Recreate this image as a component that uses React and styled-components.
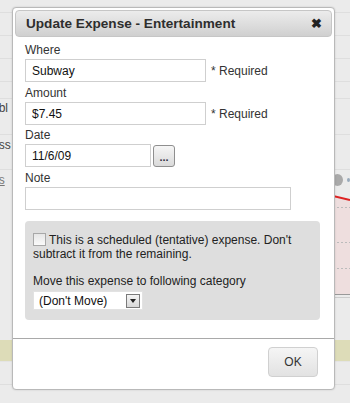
import styled, { createGlobalStyle } from "styled-components"

const GlobalStyle = createGlobalStyle`
body{
    margin: 0;
    font-family: "Liberation Sans", Arial, sans-serif;
    background: #ebebeb;
}
`

const Page = styled.div`
position: relative;
width: 350px;
height: 403px;
overflow: hidden;
background: #ebebeb;
`

const BgRow = styled.div`
box-sizing: border-box;
display: flex;
align-items: center;
justify-content: space-between;
height: ${p => p.$h}px;
border-bottom: 1px solid ${p => p.$line || "#dedede"};
background: ${p => p.$bg || "transparent"};
font-size: 12px;
color: #555;
`

const BgText = styled.span`
margin-left: -8px;
text-decoration: ${p => p.$link ? "underline" : "none"};
color: ${p => p.$link ? "#777" : "#444"};
`

const Dot = styled.span`
width: 11px;
height: 12px;
border-radius: 50%;
background: #a9a9a9;
margin-right: 7px;
box-shadow: 11px 0 0 -4px #9ab;
`

const Dialog = styled.div`
position: absolute;
left: 12px;
top: 7px;
width: 317px;
height: 377px;
background: #fff;
border: 1px solid #b9b9b9;
border-radius: 4px;
box-shadow: 0 0 2px rgba(0,0,0,0.15);
padding: 2px;
display: flex;
flex-direction: column;
`

const TitleBar = styled.div`
box-sizing: border-box;
display: flex;
align-items: center;
justify-content: space-between;
height: 27px;
padding: 0 9px 0 10px;
border: 1px solid #c6c6c6;
border-radius: 4px;
background: linear-gradient(#ececec, #d0d0d0);
font-size: 13.6px;
font-weight: bold;
color: #2e2e2e;
`

const Close = styled.span`
font-size: 13px;
color: #222;
`

const Body = styled.div`
flex: 1;
padding: 5px 10px 0 10px;
`

const Label = styled.div`
font-size: 12px;
line-height: 16px;
color: #333;
`

const Field = styled.div`
display: flex;
align-items: center;
gap: ${p => p.$gap || 5}px;
margin: 1px 0 ${p => p.$mb ?? 3}px 0;
`

const Input = styled.div`
box-sizing: border-box;
width: ${p => p.$w}px;
height: 23px;
border: 1px solid #cfcfcf;
padding-left: 6px;
display: flex;
align-items: center;
font-size: 12px;
color: #111;
`

const Hint = styled.span`
font-size: 12px;
color: #333;
`

const DotsBtn = styled.div`
box-sizing: border-box;
width: 22px;
height: 22px;
border: 1px solid #8f8f8f;
border-radius: 3px;
background: linear-gradient(#f6f6f6, #dadada);
display: flex;
align-items: flex-end;
justify-content: center;
padding-bottom: 5px;
font-size: 11px;
line-height: 8px;
font-weight: bold;
color: #334;
`

const Options = styled.div`
margin-top: 11px;
width: 295px;
box-sizing: border-box;
height: 99px;
background: #dedede;
border-radius: 4px;
padding: 12px 8px 0 8px;
`

const CheckLine = styled.div`
font-size: 12px;
line-height: 14px;
color: #222;
`

const Check = styled.span`
display: inline-block;
box-sizing: border-box;
width: 13px;
height: 13px;
border: 1px solid #a8a8a8;
background: linear-gradient(#e6e6e6, #fafafa);
vertical-align: -2px;
margin-right: 3px;
`

const MoveLabel = styled.div`
margin-top: 13px;
font-size: 12px;
line-height: 14px;
color: #222;
`

const Select = styled.div`
margin-top: 3px;
box-sizing: border-box;
width: 110px;
height: 19px;
background: #fff;
border: 1px solid #e2e2e2;
display: flex;
align-items: center;
justify-content: space-between;
padding: 0 2px 0 5px;
font-size: 12px;
color: #111;
`

const SelectArrow = styled.span`
box-sizing: border-box;
width: 14px;
height: 14px;
border: 1px solid #7a7a7a;
background: linear-gradient(#f4f4f4, #d8d8d8);
display: flex;
align-items: center;
justify-content: center;
`

const Footer = styled.div`
box-sizing: border-box;
border-top: 1px solid #a9a9a9;
height: 51px;
margin: 0 -2px -2px -2px;
display: flex;
justify-content: flex-end;
align-items: flex-start;
padding: 8px 16px 0 0;
`

const OkBtn = styled.div`
box-sizing: border-box;
width: 50px;
height: 30px;
border: 1px solid #d0d0d0;
border-radius: 4px;
background: linear-gradient(#f5f5f5, #e2e2e2);
display: flex;
align-items: center;
justify-content: center;
font-size: 12px;
color: #333;
`

const Chart = styled.svg`
display: block;
margin-left: auto;
`

export default function App(){
    return(
        <>
        <GlobalStyle/>
        <Page>
            <BgRow $h={13}/>
            <BgRow $h={23}/>
            <BgRow $h={23}/>
            <BgRow $h={23}/>
            <BgRow $h={17}/>
            <BgRow $h={18} $line="transparent"><BgText>obl</BgText></BgRow>
            <BgRow $h={18}/>
            <BgRow $h={20} $line="transparent"><BgText>ess</BgText></BgRow>
            <BgRow $h={15}/>
            <BgRow $h={20} $line="transparent"><BgText $link>ns</BgText><Dot/></BgRow>
            <BgRow $h={150} $line="transparent">
                <Chart width="17" height="150" viewBox="0 0 17 150">
                    <path d="M0 6 L17 10 L17 104 L0 104 Z" fill="#eedede"/>
                    <path d="M0 6 L17 10" stroke="#d22" strokeWidth="2" fill="none"/>
                    <path d="M0 17.5 H17 M0 52.5 H17 M0 78.5 H17" stroke="#bbb" strokeDasharray="2 2" strokeWidth="1"/>
                    <path d="M0 104.5 H17" stroke="#999" strokeWidth="1"/>
                    <path d="M0 107.5 H17" stroke="#ccc" strokeWidth="1"/>
                </Chart>
            </BgRow>
            <BgRow $h={22} $bg="#dddcb8" $line="#e4e4e4"/>
            <BgRow $h={23}/>

            <Dialog>
                <TitleBar>
                    <span>Update Expense - Entertainment</span>
                    <Close>✖</Close>
                </TitleBar>
                <Body>
                    <Label>Where</Label>
                    <Field>
                        <Input $w={181}>Subway</Input>
                        <Hint>* Required</Hint>
                    </Field>
                    <Label>Amount</Label>
                    <Field $mb={2}>
                        <Input $w={181}>$7.45</Input>
                        <Hint>* Required</Hint>
                    </Field>
                    <Label>Date</Label>
                    <Field $gap={2} $mb={3}>
                        <Input $w={126}>11/6/09</Input>
                        <DotsBtn>...</DotsBtn>
                    </Field>
                    <Label>Note</Label>
                    <Field>
                        <Input $w={266}/>
                    </Field>
                    <Options>
                        <CheckLine><Check/>This is a scheduled (tentative) expense. Don't subtract it from the remaining.</CheckLine>
                        <MoveLabel>Move this expense to following category</MoveLabel>
                        <Select>
                            <span>(Don't Move)</span>
                            <SelectArrow>
                                <svg width="6" height="4" viewBox="0 0 6 4"><path d="M0 0 H6 L3 4 Z" fill="#222"/></svg>
                            </SelectArrow>
                        </Select>
                    </Options>
                </Body>
                <Footer>
                    <OkBtn>OK</OkBtn>
                </Footer>
            </Dialog>
        </Page>
        </>
    )
}
